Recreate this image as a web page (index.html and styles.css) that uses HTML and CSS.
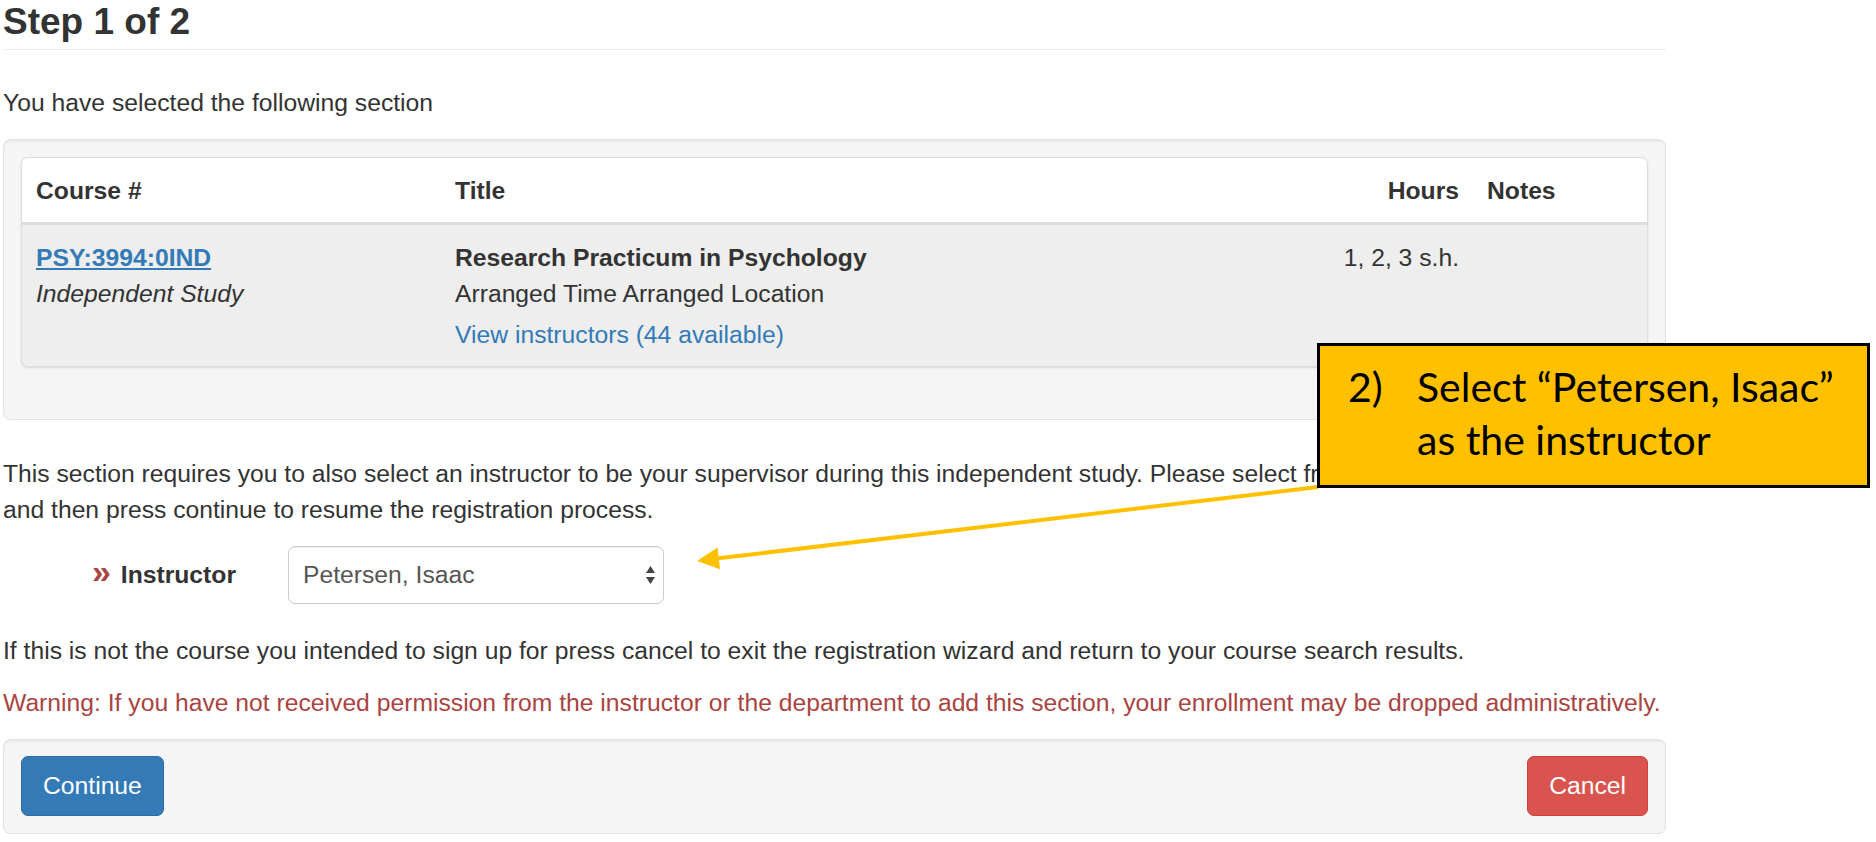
FILE: index.html
```html
<!DOCTYPE html>
<html lang="en">
<head>
<meta charset="utf-8">
<title>Step 1 of 2</title>
<link rel="stylesheet" href="styles.css">
</head>
<body>
<div class="page">
  <div class="page-header">
    <h1 class="page-title">Step 1 of 2</h1>
  </div>
  <p>You have selected the following section</p>

  <div class="well section-well">
    <div class="table-box">
      <table class="course-table">
        <colgroup>
          <col class="col-course">
          <col class="col-title">
          <col class="col-hours">
          <col class="col-notes">
        </colgroup>
        <thead>
          <tr>
            <th>Course #</th>
            <th>Title</th>
            <th class="num">Hours</th>
            <th>Notes</th>
          </tr>
        </thead>
        <tbody>
          <tr>
            <td>
              <a href="#" class="course-link">PSY:3994:0IND</a>
              <div class="course-type">Independent Study</div>
            </td>
            <td>
              <div class="course-name">Research Practicum in Psychology</div>
              <div>Arranged Time Arranged Location</div>
              <div class="instr-link"><a href="#">View instructors (44 available)</a></div>
            </td>
            <td class="num">1, 2, 3 s.h.</td>
            <td></td>
          </tr>
        </tbody>
      </table>
    </div>
  </div>

  <p>This section requires you to also select an instructor to be your supervisor during this independent study. Please select from the available instructors and&nbsp;then press continue to resume the registration process.</p>

  <div class="form-row">
    <label class="form-label" for="instructor"><span class="chev">»</span> Instructor</label>
    <div class="select-wrap">
      <select id="instructor" class="form-select">
        <option>Petersen, Isaac</option>
      </select>
      <svg class="select-icon" width="9" height="20" viewBox="0 0 9 20" aria-hidden="true">
        <polygon points="0,8 4.5,1 9,8" fill="#444"/>
        <polygon points="0,12 4.5,19 9,12" fill="#444"/>
      </svg>
    </div>
  </div>

  <p class="tight">If this is not the course you intended to sign up for press cancel to exit the registration wizard and return to your course search results.</p>
  <p class="warning">Warning: If you have not received permission from the instructor or the department to add this section, your enrollment may be dropped administratively.</p>

  <div class="well footer-well">
    <button class="btn btn-primary" type="button">Continue</button>
    <button class="btn btn-danger" type="button">Cancel</button>
  </div>
</div>

<svg class="arrow-layer" width="1876" height="842" viewBox="0 0 1876 842" aria-hidden="true">
  <line x1="1318" y1="487" x2="716" y2="558.6" stroke="#FFC000" stroke-width="4"/>
  <polygon points="697,561 720.1,569.3 717.5,547.5" fill="#FFC000"/>
</svg>

<div class="callout">
  <span class="callout-num">2)</span>
  <span class="callout-text">Select “Petersen, Isaac” as the instructor</span>
</div>
</body>
</html>
```
FILE: styles.css
```css
html, body {
  margin: 0;
  padding: 0;
}

body {
  position: relative;
  width: 1876px;
  height: 842px;
  overflow: hidden;
  background: #fff;
  color: #333;
  font-family: "Liberation Sans", Arial, Helvetica, sans-serif;
  font-size: 24.7px;
  line-height: 36px;
}

.page {
  width: 1663px;
  margin-left: 3px;
  padding-top: 1px;
}

.page-header {
  border-bottom: 1px solid #eee;
  padding-bottom: 6px;
  margin-bottom: 35px;
}

.page-title {
  margin: 0;
  font-size: 37px;
  line-height: 42px;
  font-weight: bold;
  color: #333;
}

p {
  margin: 0 0 18px;
}

p.tight {
  margin-bottom: 16px;
}

.warning {
  color: #a94442;
  white-space: nowrap;
}

.well {
  background: #f5f5f5;
  border: 1px solid #e3e3e3;
  border-radius: 7px;
  box-shadow: inset 0 2px 2px rgba(0, 0, 0, 0.05);
}

.section-well {
  padding: 17px;
  margin-bottom: 36px;
}

.table-box {
  background: #fff;
  border: 1px solid #ddd;
  border-radius: 7px;
  overflow: hidden;
  box-shadow: 0 1px 2px rgba(0, 0, 0, 0.12);
  margin-bottom: 35px;
}

.course-table {
  width: 100%;
  border-collapse: collapse;
  table-layout: fixed;
}

.col-course { width: 419px; }
.col-hours { width: 160px; }
.col-notes { width: 174px; }

.course-table th {
  text-align: left;
  font-weight: bold;
  padding: 15px 14px 13px;
  border-bottom: 3.5px solid #ddd;
  vertical-align: bottom;
}

.course-table td {
  background: #eee;
  padding: 15px 14px 13px;
  vertical-align: top;
}

.course-table .num {
  text-align: right;
  white-space: nowrap;
}

a {
  color: #337ab7;
  text-decoration: none;
}

.course-link {
  font-weight: bold;
  text-decoration: underline;
}

.course-type {
  font-style: italic;
}

.course-name {
  font-weight: bold;
}

.instr-link {
  margin-top: 4.5px;
}

.form-row {
  display: flex;
  align-items: center;
  margin-top: 1px;
  margin-bottom: 29px;
}

.form-label {
  width: 233px;
  margin-right: 52px;
  text-align: right;
  font-weight: bold;
  color: #333;
}

.chev {
  color: #a94442;
  font-size: 34px;
  line-height: 0;
  margin-right: 3px;
}

.select-wrap {
  position: relative;
  width: 376px;
  height: 58px;
}

.form-select {
  -webkit-appearance: none;
  appearance: none;
  box-sizing: border-box;
  width: 100%;
  height: 100%;
  margin: 0;
  padding: 0 30px 0 14px;
  border: 1px solid #ccc;
  border-radius: 7px;
  background: #fff;
  box-shadow: inset 0 1px 1px rgba(0, 0, 0, 0.075);
  color: #555;
  font-family: inherit;
  font-size: 24.7px;
  line-height: 36px;
}

.select-icon {
  position: absolute;
  right: 9px;
  top: 19px;
}

.footer-well {
  display: flex;
  justify-content: space-between;
  align-items: flex-start;
  padding: 16px 17px 17px;
}

.btn {
  font-family: inherit;
  font-size: 24.7px;
  line-height: 36px;
  padding: 11px 21px;
  border: 1px solid transparent;
  border-radius: 7px;
  color: #fff;
  cursor: pointer;
}

.btn-primary {
  background: #337ab7;
  border-color: #2e6da4;
}

.btn-danger {
  background: #d9534f;
  border-color: #d43f3a;
}

.arrow-layer {
  position: absolute;
  left: 0;
  top: 0;
  pointer-events: none;
}

.callout {
  position: absolute;
  left: 1317px;
  top: 343px;
  width: 553px;
  height: 145px;
  box-sizing: border-box;
  border: 3px solid #000;
  background: #FFC000;
  padding: 14px 14px 0 28px;
  display: flex;
  color: #000;
  font-family: Lato, "Open Sans", sans-serif;
  font-size: 41px;
  line-height: 53px;
}

.callout-num {
  flex: 0 0 69px;
}

.callout-text {
  flex: 1;
}
```
